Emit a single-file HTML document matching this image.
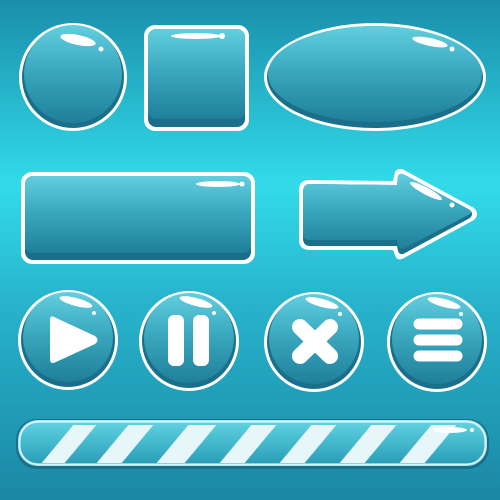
<!DOCTYPE html>
<html><head><style>html,body{margin:0;padding:0;width:500px;height:500px;overflow:hidden}</style></head>
<body>
<svg width="500" height="500" viewBox="0 0 500 500" xmlns="http://www.w3.org/2000/svg">
<defs>
<linearGradient id="bg" x1="0" y1="0" x2="0" y2="1">
<stop offset="0" stop-color="#1a8eab"/><stop offset="0.37" stop-color="#32dbe9"/><stop offset="0.6" stop-color="#27b4cc"/><stop offset="1" stop-color="#1b88a5"/>
</linearGradient>
<linearGradient id="g" x1="0" y1="0" x2="0" y2="1">
<stop offset="0" stop-color="#62cfdf"/><stop offset="0.45" stop-color="#3ba9c0"/><stop offset="1" stop-color="#1f7f9a"/>
</linearGradient>
<linearGradient id="bar" x1="0" y1="0" x2="0" y2="1">
<stop offset="0" stop-color="#5fd3e2"/><stop offset="1" stop-color="#2a9db7"/>
</linearGradient>
<clipPath id="bc"><rect x="22" y="425" width="462" height="38" rx="17"/></clipPath>
</defs>
<rect width="500" height="500" fill="url(#bg)"/>
<!-- circle -->
<circle cx="73" cy="77" r="54" fill="#fff"/>
<circle cx="73" cy="77" r="51" fill="#1a6f8a"/>
<circle cx="73" cy="74" r="49" fill="url(#g)"/>
<ellipse cx="78" cy="40" rx="18" ry="5" fill="#fff" transform="rotate(12 78 40)"/>
<circle cx="101" cy="49" r="2.5" fill="#fff"/>
<!-- square -->
<rect x="144" y="25" width="105" height="106" rx="11" fill="#fff"/>
<rect x="148" y="29" width="97" height="98" rx="8" fill="#1a6f8a"/>
<rect x="148" y="29" width="97" height="90" rx="8" fill="url(#g)"/>
<ellipse cx="196" cy="36" rx="25" ry="3" fill="#fff"/>
<circle cx="222" cy="36" r="3" fill="#fff"/>
<!-- ellipse -->
<ellipse cx="375" cy="77" rx="111" ry="54" fill="#fff"/>
<ellipse cx="375" cy="77" rx="108" ry="51" fill="#1a6f8a"/>
<ellipse cx="375" cy="74" rx="107" ry="48" fill="url(#g)"/>
<ellipse cx="430" cy="42" rx="18" ry="4" fill="#fff" transform="rotate(12 430 42)"/>
<circle cx="452" cy="49" r="2.5" fill="#fff"/>
<!-- wide rect -->
<rect x="21" y="172" width="234" height="92" rx="11" fill="#fff"/>
<rect x="25" y="176" width="226" height="84" rx="8" fill="#1a6f8a"/>
<rect x="25" y="176" width="226" height="77" rx="8" fill="url(#g)"/>
<ellipse cx="218" cy="184" rx="22" ry="3" fill="#fff"/>
<circle cx="242" cy="184" r="2.5" fill="#fff"/>
<!-- arrow -->
<path d="M310 180 L393 181 L395 172 Q398 167 404 170 L474 208 Q480 214 474 220 L404 258 Q397 262 395 255 L393 250 L310 250 Q299 250 299 240 L299 190 Q299 180 310 180 Z" fill="#fff"/>
<path d="M310 184 L397 185 L398 176 Q400 172 405 175 L470 210 Q474 214 470 218 L405 253 Q400 256 398 251 L397 246 L310 246 Q303 246 303 238 L303 192 Q303 184 310 184 Z" fill="#1a6f8a"/>
<path d="M310 184 L397 185 L398 176 Q400 172 405 175 L470 210 Q472 212 470 214 L405 248 Q400 250 398 246 L397 240 L310 240 Q303 240 303 234 L303 192 Q303 184 310 184 Z" fill="url(#g)"/>
<ellipse cx="426" cy="191" rx="18" ry="3.5" fill="#fff" transform="rotate(28 426 191)"/>
<circle cx="452" cy="205" r="2.5" fill="#fff"/>
<!-- round buttons -->
<g id="rb">
</g>
<g>
<circle cx="68" cy="340" r="50" fill="#fff"/><circle cx="68" cy="340" r="47" fill="#1a6f8a"/><circle cx="68" cy="337" r="45" fill="url(#g)"/>
<ellipse cx="76" cy="302" rx="17" ry="4" fill="#fff" transform="rotate(15 76 302)"/><circle cx="94" cy="313" r="2" fill="#fff"/>
<path d="M54 317 Q50 315 50 320 L50 359 Q50 365 56 362 L95 344 Q100 340 95 336 Z" fill="#fff"/>
</g>
<g>
<circle cx="189" cy="341" r="50" fill="#fff"/><circle cx="189" cy="341" r="47" fill="#1a6f8a"/><circle cx="189" cy="338" r="45" fill="url(#g)"/>
<ellipse cx="196" cy="302" rx="17" ry="4" fill="#fff" transform="rotate(15 196 302)"/><circle cx="214" cy="313" r="2" fill="#fff"/>
<rect x="168" y="315" width="16" height="51" rx="6" fill="#fff"/><rect x="193" y="315" width="16" height="51" rx="6" fill="#fff"/>
</g>
<g>
<circle cx="314" cy="342" r="50" fill="#fff"/><circle cx="314" cy="342" r="47" fill="#1a6f8a"/><circle cx="314" cy="339" r="45" fill="url(#g)"/>
<ellipse cx="322" cy="303" rx="17" ry="4" fill="#fff" transform="rotate(15 322 303)"/><circle cx="340" cy="314" r="2" fill="#fff"/>
<g stroke="#fff" stroke-width="16" stroke-linecap="round"><line x1="300" y1="327" x2="330" y2="356"/><line x1="330" y1="327" x2="300" y2="356"/></g>
</g>
<g>
<circle cx="437" cy="342" r="50" fill="#fff"/><circle cx="437" cy="342" r="47" fill="#1a6f8a"/><circle cx="437" cy="339" r="45" fill="url(#g)"/>
<ellipse cx="444" cy="303" rx="17" ry="4" fill="#fff" transform="rotate(15 444 303)"/><circle cx="461" cy="314" r="2" fill="#fff"/>
<g stroke="#fff" stroke-width="11" stroke-linecap="round"><line x1="419" y1="324" x2="457" y2="324"/><line x1="419" y1="340" x2="457" y2="340"/><line x1="419" y1="356" x2="457" y2="356"/></g>
</g>
<!-- progress bar -->
<rect x="16" y="419" width="473" height="50" rx="21" fill="#1a6f8a"/>
<rect x="18" y="420" width="469" height="46" rx="20" fill="#a9e9f2"/>
<rect x="20" y="422" width="465" height="42" rx="18" fill="url(#bar)"/>
<g clip-path="url(#bc)" fill="#e6f6f9">
<path d="M40 465 L75 423 L98 423 L63 465 Z"/>
<path d="M98 465 L133 423 L158 423 L123 465 Z" transform="translate(-3 0)"/>
<path d="M155 465 L190 423 L218 423 L183 465 Z"/>
<path d="M218 465 L253 423 L278 423 L243 465 Z"/>
<path d="M278 465 L313 423 L338 423 L303 465 Z"/>
<path d="M338 465 L373 423 L398 423 L363 465 Z"/>
<path d="M398 465 L433 423 L458 423 L423 465 Z"/>
</g>
<rect x="20" y="422" width="465" height="42" rx="18" fill="none" stroke="#fff" stroke-width="1.2" opacity="0.8"/>
<ellipse cx="450" cy="430" rx="17" ry="3" fill="#fff"/>
<circle cx="472" cy="430" r="2" fill="#fff"/>
</svg>
</body></html>
